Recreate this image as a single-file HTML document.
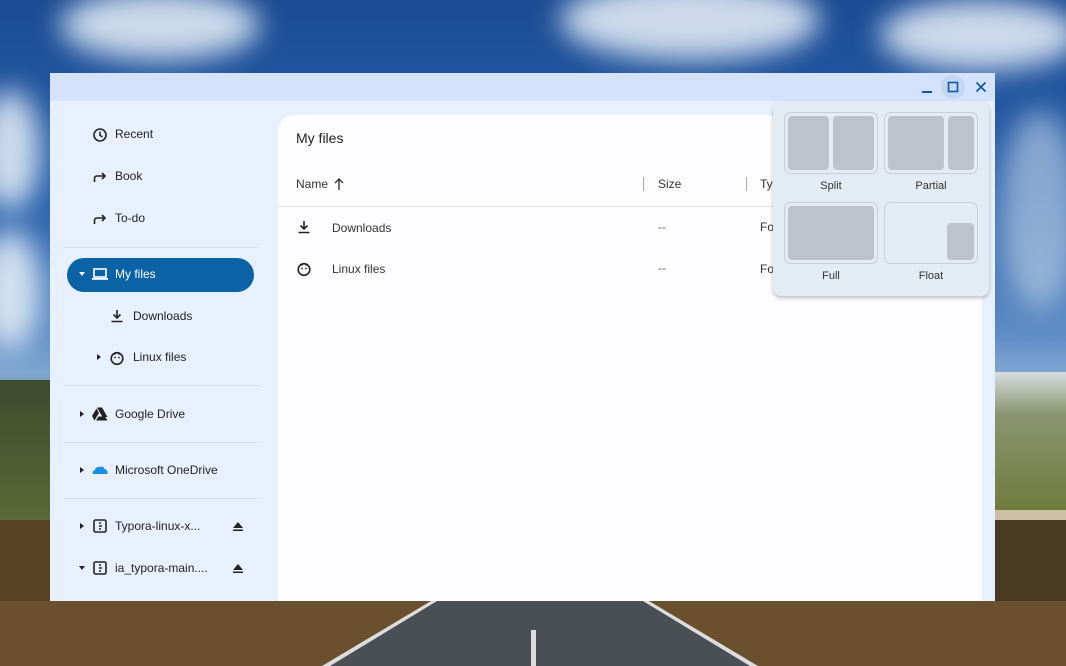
<!DOCTYPE html>
<html><head><style>
*{margin:0;padding:0;box-sizing:border-box}
body{width:1066px;height:666px;overflow:hidden;position:relative;font-family:"Liberation Sans",sans-serif;color:#1f1f1f;
background:linear-gradient(180deg,#1b4b94 0%,#2b63ad 30%,#5d8cc4 50%,#7ea6d2 56%,#6f7f5a 64%,#5a6a3a 74%,#4a3a22 80%,#6b4a28 100%);}
.cloud{position:absolute;border-radius:50%;background:rgba(235,242,250,.85);filter:blur(14px)}
.win{position:absolute;left:50px;top:73px;width:945px;height:528px;background:#e8f0fd;overflow:hidden}
.title{position:absolute;left:0;top:0;width:945px;height:28px;background:#d4e2fb}
.main{position:absolute;left:228px;top:42px;width:704px;height:486px;background:#fdfdff;border-top-left-radius:16px}
.sep{position:absolute;left:14px;width:194px;height:1px;background:#d6dde8}
.sel{position:absolute;left:17px;top:185px;width:187px;height:34px;border-radius:17px;background:#0b62a4}
.t{position:absolute;font-size:12px;white-space:nowrap}
.pop{position:absolute;left:773px;top:102px;width:216px;height:194px;background:#e3ebf4;border-radius:8px;box-shadow:0 2px 4px rgba(0,0,0,.25)}
.lay{position:absolute;width:94px;height:62px;border:1px solid #c7ced6;border-radius:7px;background:#e3ebf4}
.lay i{position:absolute;background:#bcc3ca;border-radius:4px}
.pl{position:absolute;font-size:11px;color:#333;width:94px;text-align:center}
</style></head><body>
<div class="cloud" style="left:60px;top:-10px;width:200px;height:70px"></div>
<div class="cloud" style="left:-20px;top:90px;width:60px;height:120px"></div>
<div class="cloud" style="left:-20px;top:230px;width:60px;height:120px"></div>
<div class="cloud" style="left:560px;top:-20px;width:260px;height:80px"></div>
<div class="cloud" style="left:880px;top:0px;width:200px;height:70px"></div>
<div class="cloud" style="left:1000px;top:110px;width:80px;height:200px;background:rgba(200,215,235,.6)"></div>
<div style="position:absolute;left:995px;top:372px;width:71px;height:140px;background:linear-gradient(180deg,#d8dde0 0%,#8a9570 30%,#6f7b3c 100%)"></div>
<div style="position:absolute;left:995px;top:510px;width:71px;height:10px;background:#cbbfa5"></div>
<div style="position:absolute;left:995px;top:520px;width:71px;height:146px;background:#4a3a22"></div>
<div style="position:absolute;left:0;top:380px;width:50px;height:140px;background:linear-gradient(180deg,#3d4a2e,#5a6a36)"></div>
<div style="position:absolute;left:0;top:520px;width:50px;height:146px;background:#5a4225"></div>
<div style="position:absolute;left:0;top:601px;width:1066px;height:65px;background:#6b5030"></div>
<div style="position:absolute;left:322px;top:601px;width:436px;height:65px;background:#ddd;clip-path:polygon(25% 0,75% 0,100% 100%,0 100%)"></div>
<div style="position:absolute;left:330px;top:601px;width:420px;height:65px;background:#4a4e55;clip-path:polygon(25.5% 0,74.5% 0,100% 100%,0 100%)"></div>
<div style="position:absolute;left:531px;top:630px;width:5px;height:36px;background:#ddd"></div>

<div class="win">
<div class="title"></div>
<svg style="position:absolute;left:870px;top:7px" width="14" height="14"><rect x="2" y="11" width="10" height="2" fill="#0b57a8"/></svg>
<div style="position:absolute;left:891px;top:2px;width:24px;height:24px;border-radius:12px;background:#c5d6f2"></div>
<svg style="position:absolute;left:896px;top:7px" width="14" height="14"><rect x="2.5" y="2.5" width="9" height="9" fill="none" stroke="#0b57a8" stroke-width="1.6"/></svg>
<svg style="position:absolute;left:924px;top:7px" width="14" height="14"><path d="M2.5 2.5L11.5 11.5M11.5 2.5L2.5 11.5" stroke="#0b57a8" stroke-width="1.6"/></svg>

<svg style="position:absolute;left:42px;top:54px" width="16" height="16"><circle cx="8" cy="8" r="6" fill="none" stroke="#222" stroke-width="1.6"/><path d="M8 4.5V8.3L10.5 10" fill="none" stroke="#222" stroke-width="1.5"/></svg>
<div class="t" style="left:65px;top:54px">Recent</div>
<svg style="position:absolute;left:42px;top:96px" width="16" height="16"><path d="M2.5 13V9.5Q2.5 7 5 7H13M10 4L13 7L10 10" fill="none" stroke="#222" stroke-width="1.6"/></svg>
<div class="t" style="left:65px;top:96px">Book</div>
<svg style="position:absolute;left:42px;top:138px" width="16" height="16"><path d="M2.5 13V9.5Q2.5 7 5 7H13M10 4L13 7L10 10" fill="none" stroke="#222" stroke-width="1.6"/></svg>
<div class="t" style="left:65px;top:138px">To-do</div>
<div class="sep" style="top:174px"></div>
<div class="sel"></div>
<svg style="position:absolute;left:28px;top:197px" width="8" height="8"><path d="M1 2H7L4 6Z" fill="#fff"/></svg>
<svg style="position:absolute;left:41px;top:193px" width="18" height="16"><rect x="3" y="3" width="12" height="8" fill="none" stroke="#fff" stroke-width="1.6"/><rect x="1" y="12" width="16" height="1.8" fill="#fff"/></svg>
<div class="t" style="left:65px;top:194px;color:#fff">My files</div>
<svg style="position:absolute;left:59px;top:235px" width="16" height="16"><path d="M8 2V10M4.5 6.5L8 10L11.5 6.5M2.5 13.5H13.5" fill="none" stroke="#222" stroke-width="1.6"/></svg>
<div class="t" style="left:83px;top:236px">Downloads</div>
<svg style="position:absolute;left:45px;top:280px" width="8" height="8"><path d="M2 1V7L6 4Z" fill="#222"/></svg>
<svg style="position:absolute;left:59px;top:277px" width="16" height="16"><circle cx="8" cy="8.5" r="5.8" fill="none" stroke="#222" stroke-width="1.6"/><circle cx="6" cy="7.5" r="0.9" fill="#222"/><circle cx="10" cy="7.5" r="0.9" fill="#222"/><path d="M5 2.8L6.5 4.5M11 2.8L9.5 4.5" stroke="#222" stroke-width="1.4"/></svg>
<div class="t" style="left:83px;top:277px">Linux files</div>
<div class="sep" style="top:312px"></div>
<svg style="position:absolute;left:28px;top:337px" width="8" height="8"><path d="M2 1V7L6 4Z" fill="#222"/></svg>
<svg style="position:absolute;left:41px;top:333px" width="18" height="16"><path d="M6 1.5H11L16.5 11H11.5Z" fill="#222"/><path d="M5.5 2.5L8 7L3.5 14.5L1 10Z" fill="#222"/><path d="M5 14.5H16.5L14 10.5H7.5Z" fill="#222"/></svg>
<div class="t" style="left:65px;top:334px">Google Drive</div>
<div class="sep" style="top:369px"></div>
<svg style="position:absolute;left:28px;top:393px" width="8" height="8"><path d="M2 1V7L6 4Z" fill="#222"/></svg>
<svg style="position:absolute;left:41px;top:389px" width="18" height="16"><path d="M2 12Q0.5 9 3.5 8.5Q5 4 9 5Q12 3.5 13.5 7Q17 7.5 16.5 12Z" fill="#1a8fe0"/></svg>
<div class="t" style="left:65px;top:390px">Microsoft OneDrive</div>
<div class="sep" style="top:425px"></div>
<svg style="position:absolute;left:28px;top:449px" width="8" height="8"><path d="M2 1V7L6 4Z" fill="#222"/></svg>
<svg style="position:absolute;left:42px;top:445px" width="16" height="16"><rect x="2" y="2" width="12" height="12" rx="1.5" fill="none" stroke="#222" stroke-width="1.6"/><path d="M7 5L9 5M7 8H10M7 11H9" stroke="#222" stroke-width="1.4"/></svg>
<div class="t" style="left:65px;top:446px">Typora-linux-x...</div>
<svg style="position:absolute;left:181px;top:446px" width="14" height="14"><path d="M7 3L12 9H2Z M2 10.5H12V12H2Z" fill="#222"/></svg>
<svg style="position:absolute;left:28px;top:491px" width="8" height="8"><path d="M1 2H7L4 6Z" fill="#222"/></svg>
<svg style="position:absolute;left:42px;top:487px" width="16" height="16"><rect x="2" y="2" width="12" height="12" rx="1.5" fill="none" stroke="#222" stroke-width="1.6"/><path d="M7 5L9 5M7 8H10M7 11H9" stroke="#222" stroke-width="1.4"/></svg>
<div class="t" style="left:65px;top:488px">ia_typora-main....</div>
<svg style="position:absolute;left:181px;top:488px" width="14" height="14"><path d="M7 3L12 9H2Z M2 10.5H12V12H2Z" fill="#222"/></svg>

<div class="main">
<div class="t" style="left:18px;top:15px;font-size:14px">My files</div>
<div class="t" style="left:18px;top:62px;color:#333">Name</div>
<svg style="position:absolute;left:55px;top:62px" width="12" height="14"><path d="M6 13V2M2 6L6 2L10 6" fill="none" stroke="#333" stroke-width="1.4"/></svg>
<div style="position:absolute;left:365px;top:62px;width:1px;height:14px;background:#aaa"></div>
<div class="t" style="left:380px;top:62px;color:#333">Size</div>
<div style="position:absolute;left:468px;top:62px;width:1px;height:14px;background:#aaa"></div>
<div class="t" style="left:482px;top:62px;color:#333">Type</div>
<div style="position:absolute;left:0;top:91px;width:704px;height:1px;background:#e2e2e6"></div>
<svg style="position:absolute;left:18px;top:104px" width="16" height="16"><path d="M8 2V10M4.5 6.5L8 10L11.5 6.5M2.5 13.5H13.5" fill="none" stroke="#222" stroke-width="1.6"/></svg>
<div class="t" style="left:54px;top:106px;color:#333">Downloads</div>
<div class="t" style="left:380px;top:105px;color:#666">--</div>
<div class="t" style="left:482px;top:105px;color:#333">Folder</div>
<svg style="position:absolute;left:18px;top:146px" width="16" height="16"><circle cx="8" cy="8.5" r="5.8" fill="none" stroke="#222" stroke-width="1.6"/><circle cx="6" cy="7.5" r="0.9" fill="#222"/><circle cx="10" cy="7.5" r="0.9" fill="#222"/><path d="M5 2.8L6.5 4.5M11 2.8L9.5 4.5" stroke="#222" stroke-width="1.4"/></svg>
<div class="t" style="left:54px;top:147px;color:#333">Linux files</div>
<div class="t" style="left:380px;top:146px;color:#666">--</div>
<div class="t" style="left:482px;top:147px;color:#333">Folder</div>
</div>
</div>

<div class="pop">
<div class="lay" style="left:11px;top:10px"><i style="left:3px;top:3px;width:41px;height:54px"></i><i style="left:48px;top:3px;width:41px;height:54px"></i></div>
<div class="pl" style="left:11px;top:78px">Split</div>
<div class="lay" style="left:111px;top:10px"><i style="left:3px;top:3px;width:56px;height:54px"></i><i style="left:63px;top:3px;width:26px;height:54px"></i></div>
<div class="pl" style="left:111px;top:78px">Partial</div>
<div class="lay" style="left:11px;top:100px"><i style="left:3px;top:3px;width:86px;height:54px"></i></div>
<div class="pl" style="left:11px;top:168px">Full</div>
<div class="lay" style="left:111px;top:100px"><i style="left:62px;top:20px;width:27px;height:37px"></i></div>
<div class="pl" style="left:111px;top:168px">Float</div>
</div>
</body></html>
